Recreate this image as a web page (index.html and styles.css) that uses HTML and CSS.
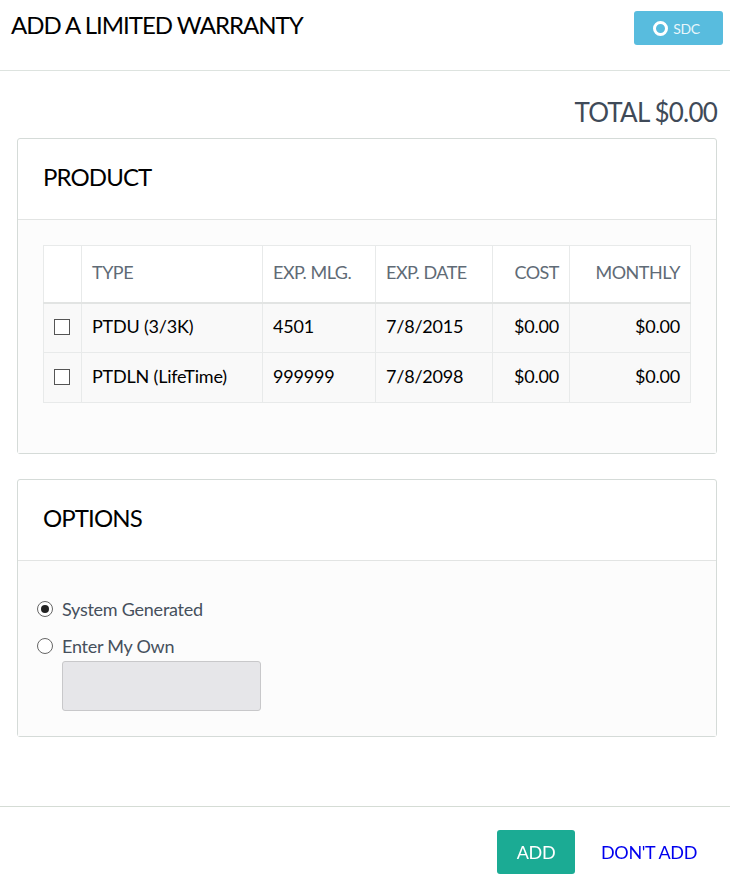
FILE: index.html
```html
<!DOCTYPE html>
<html lang="en">
<head>
<meta charset="utf-8">
<title>Add a Limited Warranty</title>
<link rel="stylesheet" href="styles.css">
</head>
<body>
<header class="modal-header">
  <h1 class="modal-title">ADD A LIMITED WARRANTY</h1>
  <button class="sdc-btn" type="button"><span class="sdc-ring"></span>SDC</button>
</header>
<main class="modal-body">
  <div class="total">TOTAL $0.00</div>
  <section class="panel panel-product">
    <h2 class="panel-title">PRODUCT</h2>
    <div class="panel-content product-content">
      <table class="grid">
        <colgroup>
          <col class="c1"><col class="c2"><col class="c3"><col class="c4"><col class="c5"><col class="c6">
        </colgroup>
        <thead>
          <tr>
            <th></th><th>TYPE</th><th>EXP. MLG.</th><th>EXP. DATE</th><th class="num">COST</th><th class="num">MONTHLY</th>
          </tr>
        </thead>
        <tbody>
          <tr>
            <td class="check"><span class="box"></span></td><td>PTDU (3/3K)</td><td>4501</td><td>7/8/2015</td><td class="num">$0.00</td><td class="num">$0.00</td>
          </tr>
          <tr>
            <td class="check"><span class="box"></span></td><td>PTDLN (LifeTime)</td><td>999999</td><td>7/8/2098</td><td class="num">$0.00</td><td class="num">$0.00</td>
          </tr>
        </tbody>
      </table>
    </div>
  </section>
  <section class="panel panel-options">
    <h2 class="panel-title">OPTIONS</h2>
    <div class="panel-content options-content">
      <div class="radio-row"><span class="radio radio-on"></span>System Generated</div>
      <div class="radio-row"><span class="radio"></span>Enter My Own</div>
      <div class="own-input"></div>
    </div>
  </section>
</main>
<footer class="modal-footer">
  <button class="add-btn" type="button">ADD</button>
  <a class="dont-add" href="#">DON'T ADD</a>
</footer>
</body>
</html>
```
FILE: styles.css
```css
* { box-sizing: border-box; }
html, body { margin: 0; padding: 0; }
body {
  width: 730px;
  height: 884px;
  overflow: hidden;
  background: #fff;
  color: #000;
  font-family: Lato, "Liberation Sans", sans-serif;
  font-size: 18px;
}
.modal-header {
  height: 71px;
  border-bottom: 1px solid #dde3df;
  display: flex;
  justify-content: space-between;
  align-items: flex-start;
  padding: 11px 7px 0 11px;
}
.modal-title {
  margin: 0;
  font-size: 24px;
  font-weight: 400;
  letter-spacing: -1px;
  line-height: 28px;
}
.sdc-btn {
  width: 89px;
  height: 34px;
  border: 0;
  border-radius: 3px;
  background: #58bcde;
  color: #e8f6fb;
  font-family: inherit;
  font-size: 14px;
  letter-spacing: -0.3px;
  display: flex;
  align-items: center;
  justify-content: center;
  gap: 5px;
  padding: 0 4px 0 0;
}
.sdc-ring {
  width: 15px;
  height: 15px;
  border: 3px solid #fff;
  border-radius: 50%;
}
.modal-body { padding: 27px 13px 0 17px; }
.total {
  color: #3f4a58;
  font-size: 26px;
  letter-spacing: -0.8px;
  line-height: 29px;
  text-align: right;
  margin-bottom: 11px;
}
.panel {
  border: 1px solid #d5dbd8;
  border-radius: 3px;
  background: #fff;
}
.panel-options { margin-top: 25px; }
.panel-title {
  margin: 0;
  height: 81px;
  padding-left: 25px;
  font-size: 24px;
  font-weight: 400;
  letter-spacing: -0.9px;
  line-height: 76px;
  border-bottom: 1px solid #e2e4e3;
}
.panel-content { background: #fcfcfc; }
.product-content { height: 233px; padding: 25px 25px 0; }
.options-content { height: 175px; padding: 29px 19px 0; }
.grid {
  width: 647px;
  border-collapse: collapse;
  table-layout: fixed;
}
.c1 { width: 38px; }
.c2 { width: 181px; }
.c3 { width: 113px; }
.c4 { width: 117px; }
.c5 { width: 77px; }
.c6 { width: 121px; }
.grid th, .grid td {
  border: 1px solid #e8eaea;
  padding: 0 10px;
  text-align: left;
  font-weight: 400;
}
.grid th {
  height: 57px;
  padding-bottom: 3px;
  background: #fff;
  color: #5f6b76;
  font-size: 18px;
  letter-spacing: -0.5px;
}
.grid thead tr { border-top: 1px solid #d5dbd8; }
.grid thead th { border-bottom: 2px solid #e2e4e3; }
.grid td {
  height: 50px;
  padding-bottom: 3px;
  background: #f9f9f9;
  font-size: 18px;
  letter-spacing: -0.2px;
  color: #000;
}
.grid .num { text-align: right; }
.grid .check { padding: 0 0 2px 10px; }
.box {
  display: block;
  width: 16px;
  height: 16px;
  border: 1px solid #555;
  background: #fff;
}
.radio-row {
  display: flex;
  align-items: center;
  gap: 9px;
  height: 37px;
  color: #46505c;
  font-size: 18px;
  letter-spacing: -0.25px;
}
.radio {
  width: 16px;
  height: 16px;
  border: 1px solid #666;
  border-radius: 50%;
  background: #fff;
  display: flex;
  align-items: center;
  justify-content: center;
}
.radio-on::after {
  content: "";
  width: 8px;
  height: 8px;
  border-radius: 50%;
  background: #222;
}
.own-input {
  width: 199px;
  height: 50px;
  margin: -3px 0 0 25px;
  border: 1px solid #c8c8ca;
  border-radius: 3px;
  background: #e6e6e9;
}
.modal-footer {
  position: fixed;
  left: 0;
  right: 0;
  top: 806px;
  height: 78px;
  border-top: 1px solid #d5dcd5;
  display: flex;
  align-items: flex-start;
  padding: 23px 0 0 497px;
}
.add-btn {
  width: 78px;
  height: 44px;
  border: 0;
  border-radius: 3px;
  background: #1bab94;
  color: #fff;
  font-family: inherit;
  font-size: 18px;
  letter-spacing: -0.3px;
  padding: 0;
}
.dont-add {
  margin-left: 26px;
  color: #0000ee;
  font-size: 18px;
  letter-spacing: -0.35px;
  line-height: 44px;
  text-decoration: none;
}
```
